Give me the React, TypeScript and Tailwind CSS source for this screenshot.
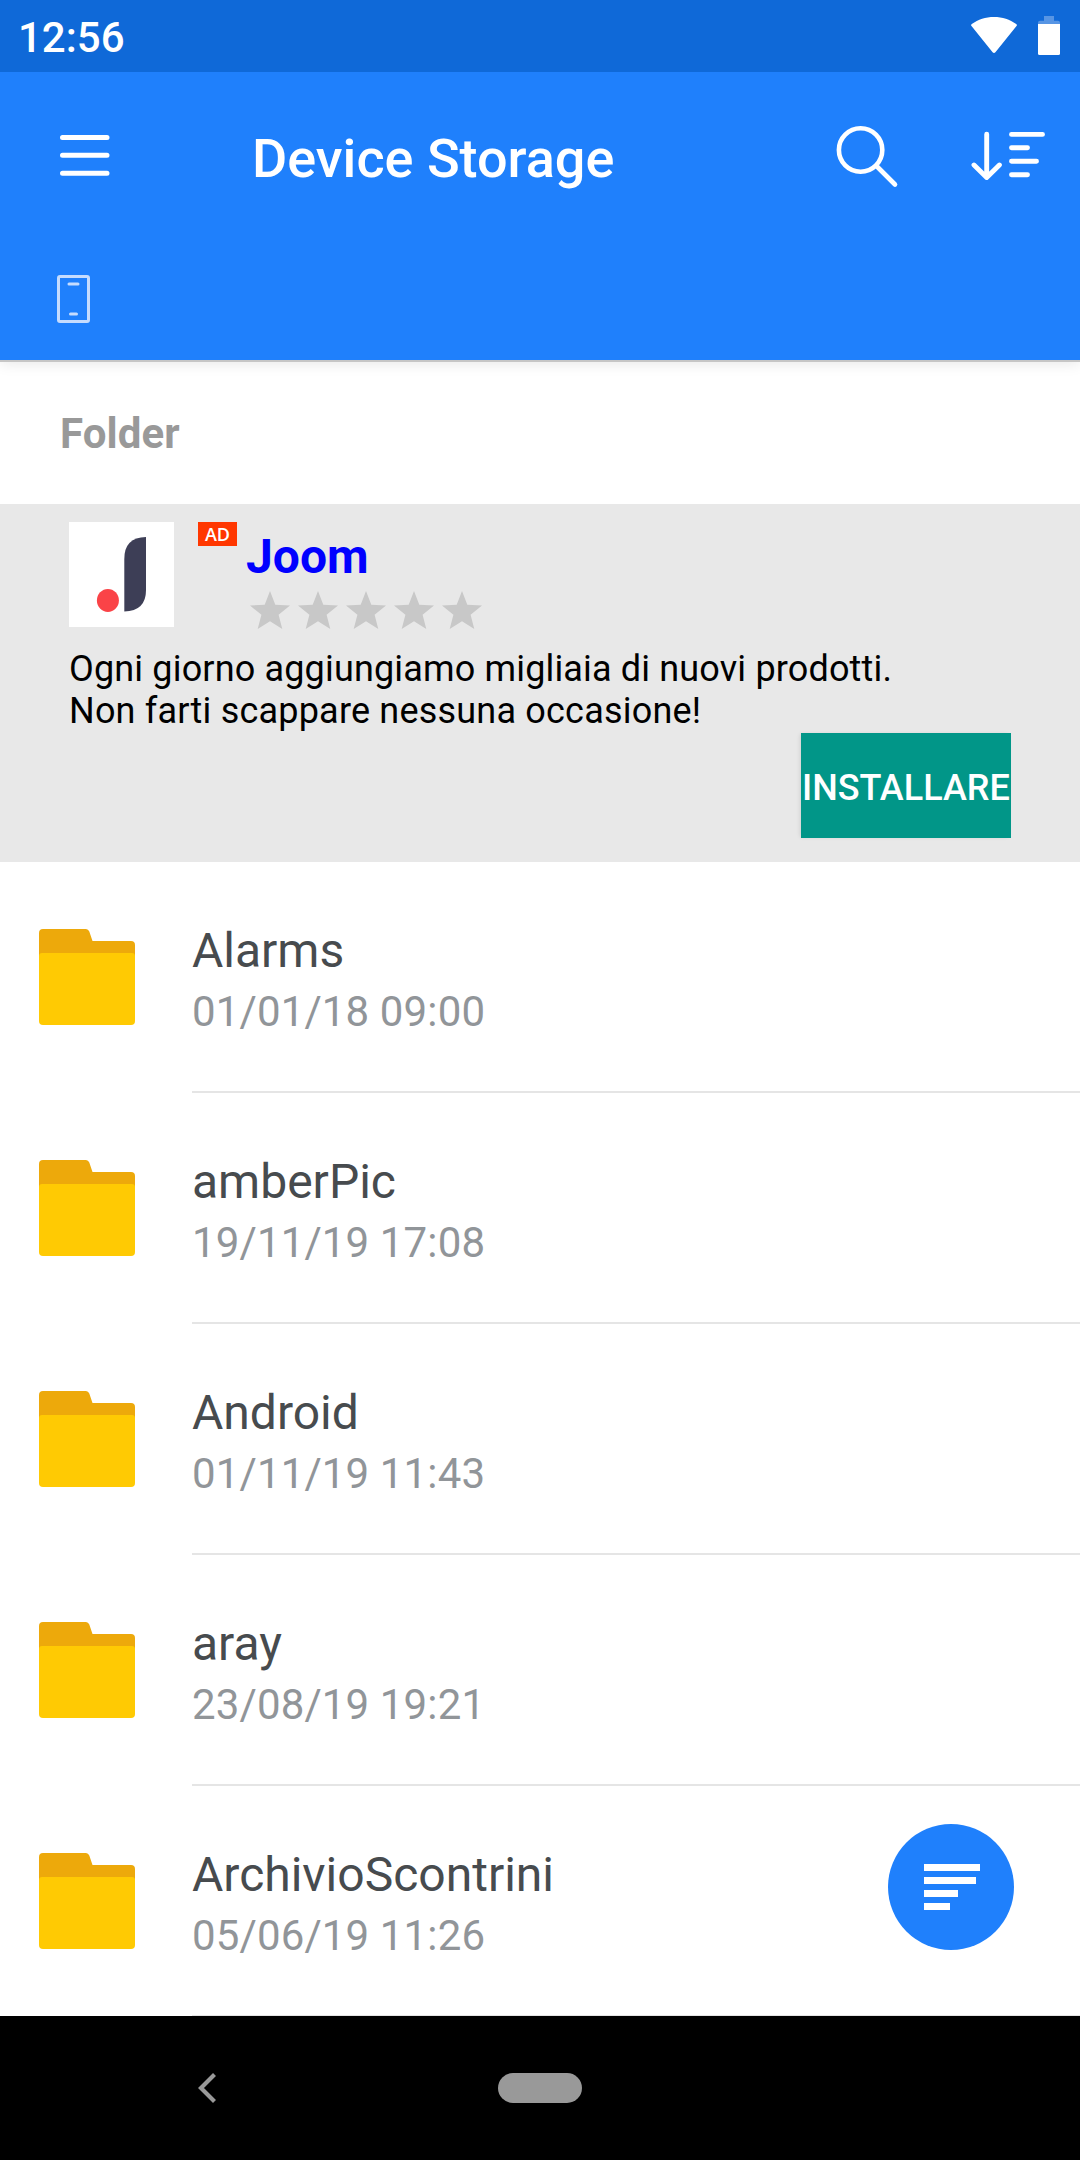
const files = [
  { name: "Alarms", date: "01/01/18 09:00" },
  { name: "amberPic", date: "19/11/19 17:08" },
  { name: "Android", date: "01/11/19 11:43" },
  { name: "aray", date: "23/08/19 19:21" },
  { name: "ArchivioScontrini", date: "05/06/19 11:26" },
];

function StatusBar() {
  return (
    <div className="relative z-20 flex h-[72px] shrink-0 items-center justify-between bg-[#0f69d8] pr-5 pl-[18px]">
      <span className="pt-1 text-[42px] leading-[60px] font-medium">12:56</span>
      <div className="flex h-full items-start gap-[21px] pt-4">
        <svg className="mt-px h-[36px] w-[46px]" viewBox="0 0 46 36" fill="#fff">
          <path d="M.8 7C7.200 2.500 14.500 0 23 0S38.800 2.500 45.200 7C46 7.600 46.100 8.300 45.500 9.100L24.400 35.200C23.600 36.200 22.400 36.200 21.600 35.200L.5 9.100C-.1 8.300 0 7.600.8 7Z" />
        </svg>
        <svg className="h-[39px] w-[22px]" viewBox="0 0 22 39">
          <path d="M6 0H16V4.700H20Q22 4.700 22 6.700V8H0V6.700Q0 4.700 2 4.700H6Z" fill="#5795e4" />
          <path d="M0 8H22V37.500Q22 39 20.500 39H1.500Q0 39 0 37.500Z" fill="#fff" />
        </svg>
      </div>
    </div>
  );
}

function Header() {
  return (
    <header className="relative z-10 h-[288px] shrink-0 bg-[#1f80fc] shadow-[0_2px_0_#c6c6c6,0_3px_14px_rgba(0,0,0,0.1)]">
      <div className="flex h-[168px] items-center pl-[60px]">
        <svg className="h-[42px] w-[50px]" viewBox="0 0 50 42" stroke="#fff" strokeWidth="5" strokeLinecap="round">
          <path d="M2.500 2.500H47M2.500 20.200H47M2.500 38.200H47" />
        </svg>
        <h1 className="ml-[142px] pt-[5px] text-[54px] leading-[64px] font-medium">Device Storage</h1>
        <svg className="ml-[222px] h-[64px] w-[64px]" viewBox="0 0 64 64" fill="none" stroke="#fff" strokeWidth="4.600" strokeLinecap="round">
          <circle cx="24.600" cy="26" r="21.700" />
          <path d="M40.500 42 59 60.500" />
        </svg>
        <svg className="ml-[71px] h-[50px] w-[76px]" viewBox="0 0 76 50" fill="none" stroke="#fff" strokeWidth="4.900" strokeLinecap="round" strokeLinejoin="round">
          <path d="M15.700 3.200V46.500M3 34 15.700 46.500 28.400 34M40.500 3.400H71.500M40.500 16.700H56.500M40.500 30.300H65.500M40.500 43.700H56.500" />
        </svg>
      </div>
      <div className="flex h-[120px] items-start pt-[35px] pl-[57px]">
        <svg className="h-[48px] w-[33px]" viewBox="0 0 33 48" fill="none" stroke="#c5dcfe" strokeWidth="3" strokeLinecap="round">
          <rect x="1.500" y="1.500" width="30" height="45" rx="1.500" />
          <path d="M12 9H21M13.500 39H19.500" />
        </svg>
      </div>
    </header>
  );
}

function Star() {
  return (
    <svg className="h-[38px] w-[40px]" viewBox="0 0 40 38" fill="#c8c8c8">
      <path d="M20 0 25.300 13.700 40 14.500 28.600 23.800 32.300 38 20 30.300 7.700 38 11.400 23.800 0 14.500 14.700 13.700Z" />
    </svg>
  );
}

function Ad() {
  return (
    <section className="flex h-[358px] shrink-0 flex-col bg-[#e8e8e8] px-[69px] pt-[18px]">
      <div className="flex h-[126px] items-start">
        <svg className="h-[105px] w-[105px] bg-white" viewBox="0 0 105 105">
          <ellipse cx="38.900" cy="78.400" rx="11" ry="11.500" fill="#fa4347" />
          <path d="M55.300 37Q55.300 15.500 77 15V68Q77 89 55.300 89.500Z" fill="#3d3e56" />
        </svg>
        <span className="ml-6 flex h-6 w-[39px] items-center justify-center bg-[#ff3700] font-['Open_Sans'] text-[18px] leading-6 font-semibold text-white">
          AD
        </span>
        <div className="ml-[9px] flex flex-col pt-[6px]">
          <h2 className="text-[48px] leading-[57px] font-bold text-[#0000ff]">Joom</h2>
          <div className="mt-[6px] ml-1 flex gap-2">
            {[1, 2, 3, 4, 5].map((n) => (
              <Star key={n} />
            ))}
          </div>
        </div>
      </div>
      <p className="text-[36px] leading-[42px] tracking-[0.16px] text-black">
        Ogni giorno aggiungiamo migliaia di nuovi prodotti.
        <br />
        <span className="tracking-[0.2px]">Non farti scappare nessuna occasione!</span>
      </p>
      <button className="mt-px flex h-[105px] w-[210px] items-center self-end bg-[#019688] pt-1 pl-px text-[36px] leading-[42px] font-medium whitespace-nowrap text-white shadow-[-2px_0_4px_-1px_rgba(0,0,0,0.1)]">
        INSTALLARE
      </button>
    </section>
  );
}

function FolderIcon() {
  return (
    <svg className="h-[96px] w-[96px]" viewBox="0 0 96 96">
      <path d="M4 0H47Q49.300 0 50.300 2.500L53.500 12H92Q96 12 96 16V40H0V4Q0 0 4 0Z" fill="#eda90b" />
      <path d="M3 24H93Q96 24 96 27V92Q96 96 92 96H4Q0 96 0 92V27Q0 24 3 24Z" fill="#ffca03" />
    </svg>
  );
}

function FileRow({ name, date }: { name: string; date: string }) {
  return (
    <li className="flex h-[231px] pl-[39px]">
      <div className="mr-[57px] pt-[67px]">
        <FolderIcon />
      </div>
      <div className="flex-1 border-b-2 border-[#e5e5e5] pt-[59px]">
        <div className="text-[48px] leading-[60px] text-[#474b4e]">{name}</div>
        <div className="text-[42px] leading-[62px] tracking-[0.13px] text-[#919599]">{date}</div>
      </div>
    </li>
  );
}

export default function App() {
  return (
    <div className="relative flex h-[2160px] w-[1080px] flex-col overflow-hidden bg-white font-[Roboto,sans-serif] text-white">
      <StatusBar />
      <Header />
      <div className="h-[144px] shrink-0 pt-[44px] pl-[60px] text-[42px] leading-[60px] font-bold tracking-[0.1px] text-[#999]">Folder</div>
      <Ad />
      <ul className="h-[1154px] shrink-0 overflow-hidden">
        {files.map((f) => (
          <FileRow key={f.name} name={f.name} date={f.date} />
        ))}
      </ul>
      <nav className="flex h-[144px] shrink-0 items-center bg-black pl-[198px]">
        <svg className="h-[32px] w-[18px]" viewBox="0 0 18 32" fill="none" stroke="#999" strokeWidth="4.200">
          <path d="M16.500 2.500 3 16 16.500 29.500" />
        </svg>
        <div className="ml-[282px] h-[30px] w-[84px] rounded-full bg-[#999]" />
      </nav>
      <button className="absolute top-[1824px] left-[888px] flex h-[126px] w-[126px] flex-col gap-[6px] rounded-full bg-[#1f80fc] pt-[40px] pl-[36px]">
        <span className="h-[7px] w-[56px] bg-white" />
        <span className="h-[7px] w-[52px] bg-white" />
        <span className="h-[7px] w-[34px] bg-white" />
        <span className="h-[7px] w-[26px] bg-white" />
      </button>
    </div>
  );
}
